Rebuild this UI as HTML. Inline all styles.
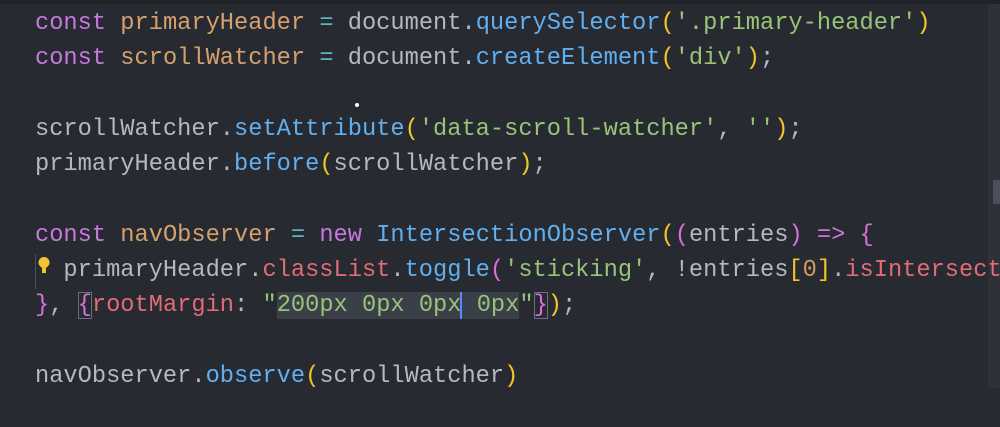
<!DOCTYPE html>
<html><head><style>
html,body{margin:0;padding:0}
body{width:1000px;height:427px;background:#272a31;overflow:hidden;position:relative;font-family:"Liberation Mono","DejaVu Sans Mono",monospace;font-size:23.7px;color:#b4b8bf}
.top{position:absolute;left:0;top:0;width:1000px;height:4px;background:#1f2227}
.l{position:absolute;left:35px;white-space:pre;line-height:35px;height:35px}
.k{color:#c678dd}.v{color:#d4a06e}.o{color:#56b6c2}.f{color:#61afef}.s{color:#98c379}.y{color:#f2c624}.p{color:#e06c75}.m{color:#da70d6}.n{color:#d19a66}
.sel{background:#3b3f47}
.box{outline:1px solid #6b717c;outline-offset:-1px}
.sb{position:absolute;left:988px;top:4px;width:12px;height:384px;background:#2e3138}
.sb2{position:absolute;left:993px;top:180px;width:7px;height:24px;background:#4a4f5a}
.guide{position:absolute;left:35px;top:254px;width:1px;height:35px;background:#4b5059}
</style></head><body>
<div class="top"></div>
<div class="sb"></div><div class="sb2"></div>
<div class="l" style="top:6px"><span class="k">const</span> <span class="v">primaryHeader</span> <span class="o">=</span> document.<span class="f">querySelector</span><span class="y">(</span><span class="s">'.primary-header'</span><span class="y">)</span></div>
<div class="l" style="top:41px"><span class="k">const</span> <span class="v">scrollWatcher</span> <span class="o">=</span> document.<span class="f">createElement</span><span class="y">(</span><span class="s">'div'</span><span class="y">)</span>;</div>
<div class="l" style="top:112px">scrollWatcher.<span class="f">setAttribute</span><span class="y">(</span><span class="s">'data-scroll-watcher'</span>, <span class="s">''</span><span class="y">)</span>;</div>
<div class="l" style="top:147px">primaryHeader.<span class="f">before</span><span class="y">(</span>scrollWatcher<span class="y">)</span>;</div>
<div class="l" style="top:218px"><span class="k">const</span> <span class="v">navObserver</span> <span class="o">=</span> <span class="k">new</span> <span class="f">IntersectionObserver</span><span class="y">(</span><span class="m">(</span>entries<span class="m">)</span> <span class="k">=&gt;</span> <span class="m">{</span></div>
<div class="guide"></div>
<svg style="position:absolute;left:37px;top:256px" width="14" height="20" viewBox="0 0 14 20"><circle cx="7" cy="6.5" r="5.5" fill="#f4c430"/><rect x="5" y="11" width="4" height="6" fill="#f4c430"/></svg>
<div class="l" style="top:253px">  primaryHeader.<span class="p">classList</span>.<span class="f">toggle</span><span class="m">(</span><span class="s">'sticking'</span>, !entries<span class="y">[</span><span class="n">0</span><span class="y">]</span>.<span class="p">isIntersecting</span></div>
<div class="l" style="top:288px"><span class="m">}</span>, <span class="m box">{</span><span class="p">rootMargin</span>: <span class="s">"<span class="sel">200px 0px 0px</span><span style="border-left:2px solid #528bff;margin-left:-1px"></span><span class="sel"> 0px</span>"</span><span class="m box">}</span><span class="y">)</span>;</div>
<div class="l" style="top:359px">navObserver.<span class="f">observe</span><span class="y">(</span>scrollWatcher<span class="y">)</span></div>
<div style="position:absolute;left:355px;top:103px;width:4px;height:4px;border-radius:2px;background:#fff"></div>
</body></html>
